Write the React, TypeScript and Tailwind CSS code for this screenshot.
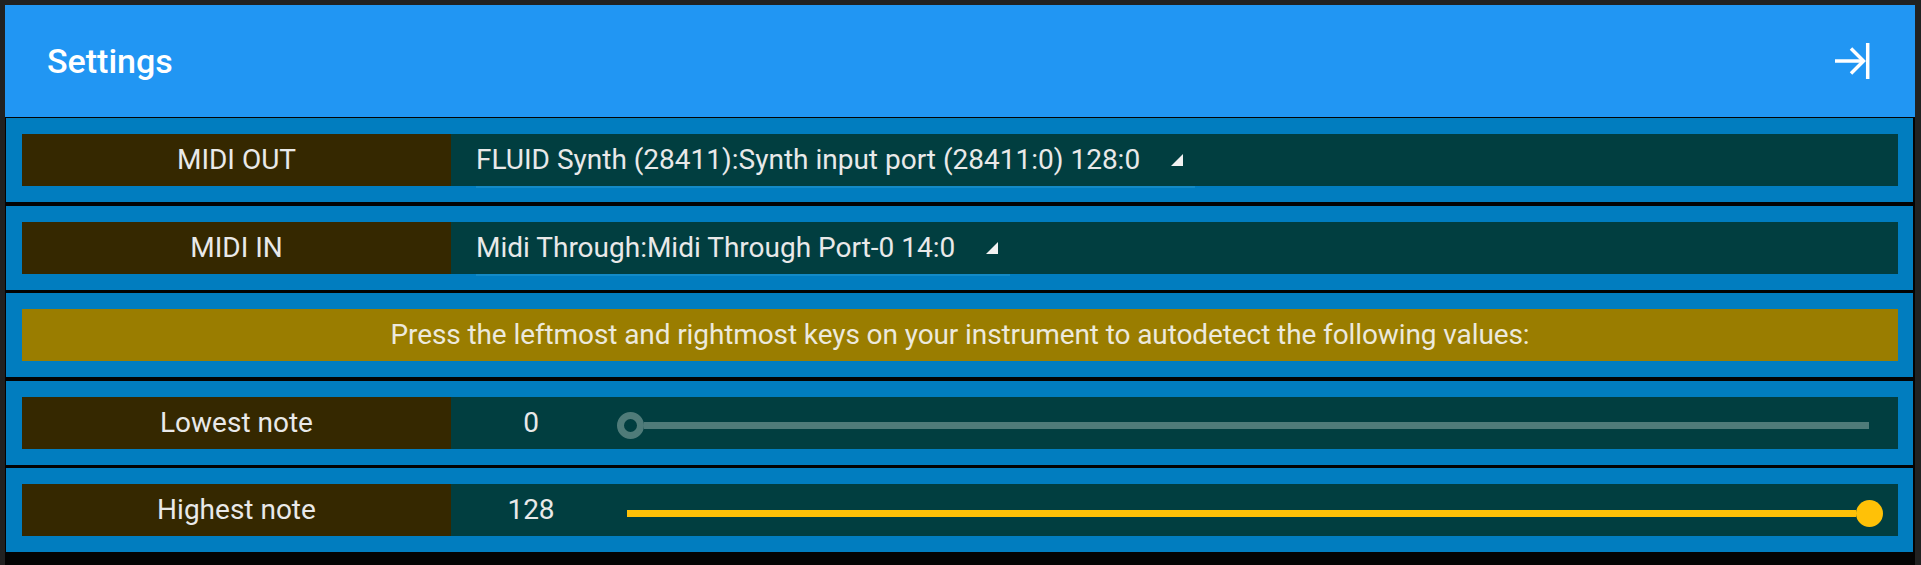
import React from "react";

const CollapseIcon = () => (
  <svg width="35" height="36" viewBox="0 0 35 36" fill="none" stroke="#ffffff" strokeWidth="3.5">
    <path d="M0 18H28" />
    <path d="M16 5.5L28.5 18L16 30.5" />
    <path d="M32.7 0V36" />
  </svg>
);

const DropTriangle = () => (
  <svg width="12" height="12" viewBox="0 0 12 12">
    <polygon points="12,0 12,12 0,12" fill="#f2f2f2" />
  </svg>
);

const Label = ({ text }: { text: string }) => (
  <div className="flex w-[429px] shrink-0 items-center justify-center bg-[#352800] text-[#e9e9e9]">
    {text}
  </div>
);

const PortRow = ({ label, port }: { label: string; port: string }) => (
  <div className="flex h-[52px]">
    <Label text={label} />
    <div className="flex flex-1 items-stretch bg-[#013e40] pl-[25px]">
      <div className="flex items-center gap-[31px] pr-[12px] text-[#e9e9e9] shadow-[0_2px_0_#138ac7]">
        <span>{port}</span>
        <DropTriangle />
      </div>
    </div>
  </div>
);

const NoteSlider = ({ value, max }: { value: number; max: number }) => {
  const frac = value / max;
  return (
    <div className="flex flex-1 items-center pl-[6px] pr-[15px] pt-[6px]">
      {frac > 0 && (
        <div className="ml-[10px] h-[7px] bg-[#ffc107]" style={{ flexGrow: frac }} />
      )}
      {frac > 0 ? (
        <div className="h-[27px] w-[27px] shrink-0 rounded-full bg-[#ffc107]" />
      ) : (
        <div className="h-[27px] w-[27px] shrink-0 rounded-full border-[7px] border-[#4f7b79]" />
      )}
      {frac < 1 && (
        <div className="mr-[14px] h-[7px] bg-[#4f7b79]" style={{ flexGrow: 1 - frac }} />
      )}
    </div>
  );
};

const NoteRow = ({ label, value }: { label: string; value: number }) => (
  <div className="flex h-[52px]">
    <Label text={label} />
    <div className="flex flex-1 bg-[#013e40]">
      <div className="flex w-[160px] shrink-0 items-center justify-center text-[#e9e9e9]">
        {value}
      </div>
      <NoteSlider value={value} max={128} />
    </div>
  </div>
);

const Row = ({ children }: { children: React.ReactNode }) => (
  <div className="bg-[#017dbf] pb-[16px] pl-[16px] pr-[15px] pt-[16px]">{children}</div>
);

export default function App() {
  return (
    <div className="h-[565px] w-[1921px] overflow-hidden bg-[#212121] pl-[5px] pr-[6px] pt-[5px] font-['Roboto',sans-serif] text-[28px] leading-none">
      <div className="flex h-full flex-col bg-[#030303]">
        <div className="flex h-[112px] shrink-0 items-center justify-between bg-[#2196f3] pl-[42px] pr-[45px]">
          <span className="text-[34px] font-medium text-white">Settings</span>
          <CollapseIcon />
        </div>
        <div className="flex flex-col gap-[3.5px] pl-[1px] pr-[2px] pt-[1px]">
          <Row>
            <PortRow label="MIDI OUT" port="FLUID Synth (28411):Synth input port (28411:0) 128:0" />
          </Row>
          <Row>
            <PortRow label="MIDI IN" port="Midi Through:Midi Through Port-0 14:0" />
          </Row>
          <Row>
            <div className="flex h-[52px] items-center justify-center bg-[#9a7d00] tracking-[-0.1px] text-[#ece9dc]">
              Press the leftmost and rightmost keys on your instrument to autodetect the following values:
            </div>
          </Row>
          <Row>
            <NoteRow label="Lowest note" value={0} />
          </Row>
          <Row>
            <NoteRow label="Highest note" value={128} />
          </Row>
        </div>
      </div>
    </div>
  );
}
